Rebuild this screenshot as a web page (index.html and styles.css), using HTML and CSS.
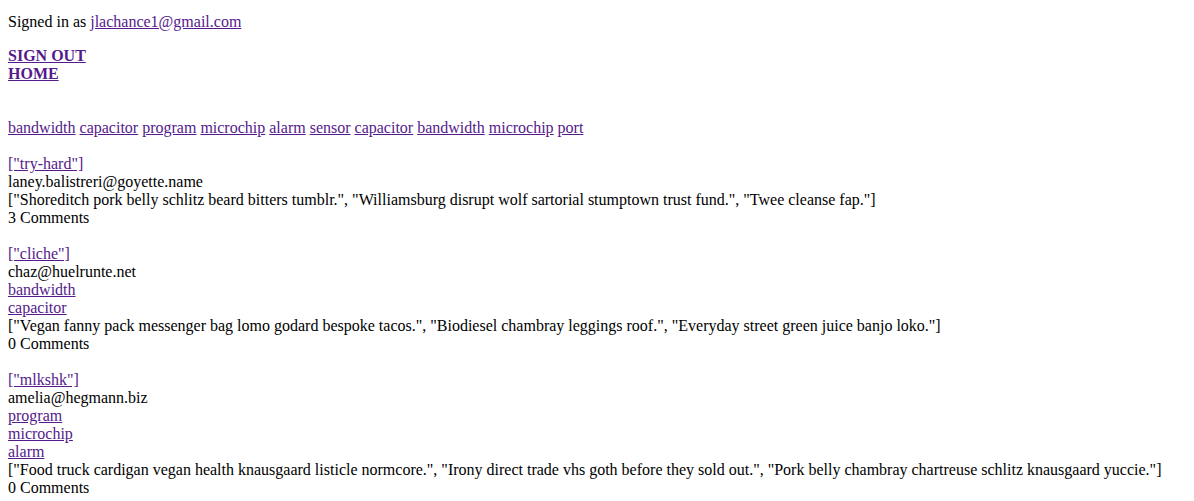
FILE: index.html
```html
<!DOCTYPE html>
<html>
<head>
<meta charset="utf-8">
<link rel="stylesheet" href="styles.css">
</head>
<body>
<p class="signed">Signed in as <a href="#">jlachance1@gmail.com</a></p>
<div class="nav">
  <a href="#">SIGN OUT</a>
  <a href="#">HOME</a>
</div>
<p class="tags">
  <a href="#">bandwidth</a> <a href="#">capacitor</a> <a href="#">program</a> <a href="#">microchip</a> <a href="#">alarm</a> <a href="#">sensor</a> <a href="#">capacitor</a> <a href="#">bandwidth</a> <a href="#">microchip</a> <a href="#">port</a>
</p>
<div class="post">
  <a href="#">["try-hard"]</a>
  <div>laney.balistreri@goyette.name</div>
  <div>["Shoreditch pork belly schlitz beard bitters tumblr.", "Williamsburg disrupt wolf sartorial stumptown trust fund.", "Twee cleanse fap."]</div>
  <div>3 Comments</div>
</div>
<div class="post">
  <a href="#">["cliche"]</a>
  <div>chaz@huelrunte.net</div>
  <a href="#">bandwidth</a>
  <a href="#">capacitor</a>
  <div>["Vegan fanny pack messenger bag lomo godard bespoke tacos.", "Biodiesel chambray leggings roof.", "Everyday street green juice banjo loko."]</div>
  <div>0 Comments</div>
</div>
<div class="post">
  <a href="#">["mlkshk"]</a>
  <div>amelia@hegmann.biz</div>
  <a href="#">program</a>
  <a href="#">microchip</a>
  <a href="#">alarm</a>
  <div>["Food truck cardigan vegan health knausgaard listicle normcore.", "Irony direct trade vhs goth before they sold out.", "Pork belly chambray chartreuse schlitz knausgaard yuccie."]</div>
  <div>0 Comments</div>
</div>
</body>
</html>
```
FILE: styles.css
```css
html, body {
  margin: 0;
  padding: 0;
}
body {
  padding: 13px 8px 8px;
  font-family: "Liberation Serif", "Times New Roman", serif;
  font-size: 16px;
  line-height: 18px;
  color: #000;
  background: #fff;
}
a {
  color: #551a8b;
  text-decoration: underline;
}
.signed {
  margin: 0 0 16px;
}
.nav {
  display: flex;
  flex-direction: column;
  align-items: flex-start;
  font-weight: bold;
}
.tags {
  margin: 36px 0 18px;
}
.post {
  display: flex;
  flex-direction: column;
  align-items: flex-start;
  margin-bottom: 18px;
}
```
